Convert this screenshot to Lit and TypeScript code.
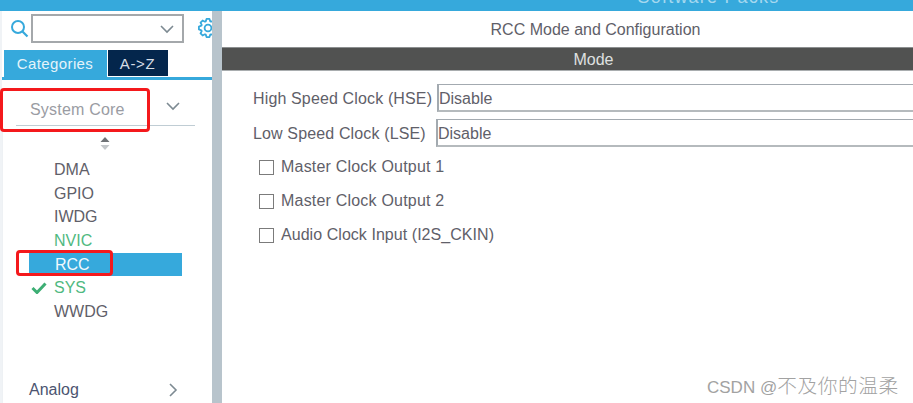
import { LitElement, css, html } from 'lit'
import { customElement } from 'lit/decorators.js'

const chevronDown = html`<svg width="16" height="10" viewBox="0 0 16 10"><path d="M2 2l6 6 6-6" fill="none" stroke="#7d8a92" stroke-width="1.6"/></svg>`

// outline of a gear with 8 teeth, centred on (10,10)
const gearPath = () => {
  const pts: string[] = []
  for (let i = 0; i < 8; i++) {
    const a = i * Math.PI / 4
    const at = (r: number, d: number) => `${(10 + r * Math.cos(a + d)).toFixed(2)} ${(10 + r * Math.sin(a + d)).toFixed(2)}`
    pts.push(at(7, -0.33), at(9.2, -0.16), at(9.2, 0.16), at(7, 0.33))
  }
  return 'M' + pts.join('L') + 'Z'
}

@customElement('app-root')
export class AppRoot extends LitElement {
  static styles = css`
    :host {
      display: block;
      width: 913px;
      height: 403px;
      overflow: hidden;
      position: relative;
      background: #fff;
      font-family: 'Liberation Sans', Arial, sans-serif;
      font-size: 16px;
      color: #5f6069;
    }
    .topbar {
      height: 11px;
      background: #36a9dc;
      overflow: hidden;
      text-align: center;
      padding-left: 504px;
      box-sizing: border-box;
    }
    .topbar span {
      display: block;
      margin-top: -13px;
      color: #a5d8ef;
      font-size: 18px;
      line-height: 20px;
      letter-spacing: 1.2px;
    }
    .body { display: flex; height: 392px; }

    .side {
      width: 212px;
      flex: none;
      box-sizing: border-box;
      border-left: 2px solid #f0f3f6;
      overflow: hidden;
    }
    .search {
      display: flex;
      align-items: center;
      height: 29px;
      margin-top: 3px;
      padding-left: 7px;
    }
    .search .mag { flex: none; width: 22px; }
    .combo {
      width: 153px;
      height: 29px;
      box-sizing: border-box;
      border: 2px solid #a4a8ab;
      display: flex;
      align-items: center;
      justify-content: flex-end;
      padding-right: 7px;
      flex: none;
    }
    .gear { flex: none; margin: 0 0 2px 14px; width: 14px; height: 20px; }

    .tabs {
      display: flex;
      margin: 7px 0 0 2px;
      height: 27px;
      gap: 1px;
      font-size: 15px;
    }
    .tab {
      display: flex;
      align-items: center;
      justify-content: center;
      width: 103px;
      background: #36a9dc;
      color: #e4f3fa;
      letter-spacing: 0.4px;
      padding-right: 1px;
      box-sizing: border-box;
    }
    .tab.dark { width: 60px; background: #04264c; color: #d5dde6; margin-bottom: 1px; letter-spacing: 0.6px; }
    .rule { height: 3px; background: #36a9dc; }
    .panel {
      border-left: 1px solid #eef1f4;
      height: 320px;
    }

    .group {
      display: flex;
      align-items: center;
      margin: 19px 17px 0 13px;
      padding: 0 0 5px 14px;
      height: 27px;
      box-sizing: border-box;
      border-bottom: 1px solid #c0cdd4;
      color: #9a9ca3;
      letter-spacing: 0.2px;
    }
    .group span { flex: 1; }
    .group svg { margin: 0 14px 8px 0; }
    .sort { display: flex; justify-content: center; width: 204px; margin-top: 10px; height: 16px; }

    .items { margin-top: 6px; }
    .item {
      position: relative;
      height: 23.7px;
      line-height: 23.7px;
      margin-left: 26px;
      width: 153px;
      padding-left: 25px;
      box-sizing: border-box;
    }
    .item.ok { color: #4fb981; }
    .item.on { background: #36a9dc; color: #f2f9fd; padding-left: 26px; }
    .item svg { position: absolute; left: 2px; top: 6px; }

    .analog {
      display: flex;
      align-items: center;
      justify-content: space-between;
      margin: 54px 34px 0 26px;
      height: 24px;
      color: #4c5470;
    }

    .scroll { width: 10px; flex: none; background: #b8c4cc; }

    .main { flex: 1; min-width: 0; }
    .title {
      height: 36px;
      line-height: 37px;
      text-align: center;
      padding-left: 56px;
    }
    .bar {
      height: 24px;
      line-height: 24px;
      background: #515251;
      border-top: 1px solid #8c8f90;
      border-bottom: 1px solid #a9adaf;
      box-sizing: border-box;
      color: #dfe0e0;
      text-align: center;
      padding-left: 52px;
    }
    .form { padding: 13px 0 0 31px; }
    .row { display: flex; align-items: center; height: 28px; margin-bottom: 7px; }
    .row label { white-space: nowrap; width: 179px; flex: none; letter-spacing: 0.14px; padding-top: 2px; }
    .row.lse label { width: 173px; }
    .input {
      flex: 1;
      height: 28px;
      box-sizing: border-box;
      border: 1px solid #a3aab0;
      border-bottom: 2px solid #b5babd;
      border-left-width: 2px;
      border-right: none;
      line-height: 27px;
    }
    .row.hse .input { margin-left: 5px; }
    .row.lse .input { margin-left: 10px; }
    .check { display: flex; align-items: center; height: 34px; padding-left: 6px; letter-spacing: 0.2px; }
    .check.tight { letter-spacing: 0.05px; }
    .checks { margin-top: -4px; }
    .box {
      width: 15px;
      height: 15px;
      box-sizing: border-box;
      border: 1.5px solid #7b7b7b;
      margin-right: 7px;
      flex: none;
    }

    .mark {
      position: absolute;
      box-sizing: border-box;
      border: 3px solid #f4191c;
      border-radius: 4px;
    }
    .mark.core { left: 0; top: 88px; width: 150px; height: 44px; }
    .mark.rcc { left: 16px; top: 250px; width: 97px; height: 26px; }
    .watermark {
      position: absolute;
      left: 707px;
      top: 373px;
      font-size: 17px;
      line-height: 24px;
      color: #a2a2a2;
      font-family: 'Liberation Sans', 'Noto Sans CJK SC', sans-serif;
      white-space: nowrap;
    }
    .watermark span { font-size: 19.7px; font-family: 'Noto Sans CJK SC', sans-serif; font-weight: 300; letter-spacing: 0.6px; }
  `

  items: [string, string][] = [
    ['DMA', ''],
    ['GPIO', ''],
    ['IWDG', ''],
    ['NVIC', 'ok'],
    ['RCC', 'on'],
    ['SYS', 'ok'],
    ['WWDG', '']
  ]

  render () {
    return html`
      <div class="topbar"><span>Software Packs</span></div>
      <div class="body">
        <div class="side">
          <div class="search">
            <svg class="mag" width="20" height="20" viewBox="0 0 20 20">
              <circle cx="8" cy="8" r="6" fill="none" stroke="#36a9dc" stroke-width="2"/>
              <path d="M12.5 12.5l5 5" stroke="#36a9dc" stroke-width="2.2"/>
            </svg>
            <div class="combo">${chevronDown}</div>
            <svg class="gear" viewBox="0 0 14 20">
              <path d=${gearPath()} fill="none" stroke="#36a9dc" stroke-width="1.8" stroke-linejoin="round"/>
              <circle cx="10" cy="10" r="3.4" fill="none" stroke="#36a9dc" stroke-width="1.8"/>
            </svg>
          </div>
          <div class="tabs">
            <div class="tab">Categories</div>
            <div class="tab dark">A-&gt;Z</div>
          </div>
          <div class="rule"></div>
          <div class="panel">
            <div class="group">
              <span>System Core</span>
              ${chevronDown}
            </div>
            <div class="sort">
              <svg width="12" height="16" viewBox="0 0 12 16">
                <path d="M6 1l4.5 5h-9z" fill="#6e7276"/>
                <path d="M6 14L1.5 9h9z" fill="#c3c7ca"/>
              </svg>
            </div>
            <div class="items">
              ${this.items.map(([name, cls]) => html`
                <div class="item ${cls}">
                  ${name === 'SYS' ? html`
                    <svg width="16" height="12" viewBox="0 0 16 12"><path d="M1.5 6l4.5 4.5L14.5 1.5" fill="none" stroke="#3dae74" stroke-width="3"/></svg>
                  ` : ''}
                  ${name}
                </div>
              `)}
            </div>
            <div class="analog">
              <span>Analog</span>
              <svg width="10" height="16" viewBox="0 0 10 16"><path d="M2 2l6 6-6 6" fill="none" stroke="#7d8a92" stroke-width="1.6"/></svg>
            </div>
          </div>
        </div>
        <div class="scroll"></div>
        <div class="main">
          <div class="title">RCC Mode and Configuration</div>
          <div class="bar">Mode</div>
          <div class="form">
            <div class="row hse"><label>High Speed Clock (HSE)</label><div class="input">Disable</div></div>
            <div class="row lse"><label>Low Speed Clock (LSE)</label><div class="input">Disable</div></div>
            <div class="checks">
              <div class="check"><div class="box"></div>Master Clock Output 1</div>
              <div class="check"><div class="box"></div>Master Clock Output 2</div>
              <div class="check tight"><div class="box"></div>Audio Clock Input (I2S_CKIN)</div>
            </div>
          </div>
        </div>
      </div>
      <div class="mark core"></div>
      <div class="mark rcc"></div>
      <div class="watermark">CSDN @<span>不及你的温柔</span></div>
    `
  }
}
